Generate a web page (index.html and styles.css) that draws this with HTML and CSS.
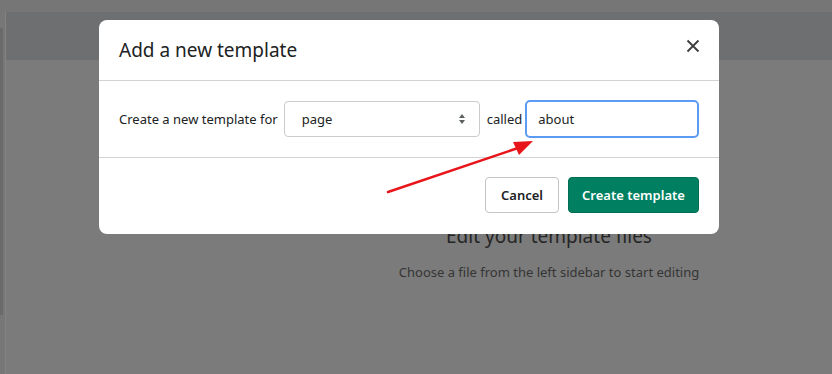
FILE: index.html
```html
<!DOCTYPE html>
<html>
<head>
<meta charset="utf-8">
<link rel="stylesheet" href="styles.css">
</head>
<body>
<div class="app">
  <div class="topbar"></div>
  <div class="frame">
    <div class="rail"><div class="rail-thumb"></div></div>
    <div class="workspace">
      <div class="toolbar"></div>
      <div class="main">
        <div class="sidebar"></div>
        <div class="content">
          <h2 class="empty-title">Edit your template files</h2>
          <p class="empty-text">Choose a file from the left sidebar to start editing</p>
        </div>
      </div>
    </div>
  </div>
</div>

<div class="modal">
  <div class="modal-header">
    <h1 class="modal-title">Add a new template</h1>
    <button class="close" aria-label="Close">
      <svg width="14" height="14" viewBox="0 0 14 14"><path d="M1.5 1.5 L12.5 12.5 M12.5 1.5 L1.5 12.5" stroke="#3d3d3d" stroke-width="1.8" fill="none"/></svg>
    </button>
  </div>
  <div class="modal-body">
    <span class="label">Create a new template for</span>
    <div class="select">
      <span>page</span>
      <svg class="updown" width="8" height="12" viewBox="0 0 8 12"><path d="M4 1 L7 5 H1 Z M4 11 L1 7 H7 Z" fill="#5c5f62"/></svg>
    </div>
    <span class="label called">called</span>
    <div class="input">about</div>
  </div>
  <div class="modal-footer">
    <button class="btn btn-secondary">Cancel</button>
    <button class="btn btn-primary">Create template</button>
  </div>
</div>

<svg class="annotation" width="832" height="374" viewBox="0 0 832 374">
  <line x1="388" y1="192" x2="518" y2="148" stroke="#e8161b" stroke-width="2.4" stroke-linecap="round"/>
  <path d="M533 141 L513 142 L519 155 Z" fill="#e8161b"/>
</svg>
</body>
</html>
```
FILE: styles.css
```css
* { box-sizing: border-box; }
html, body { margin: 0; padding: 0; }
body {
  width: 832px;
  height: 374px;
  overflow: hidden;
  background: #7a7a7a;
  font-family: "Noto Sans", "Open Sans", sans-serif;
  position: relative;
}
.app { display: flex; flex-direction: column; height: 374px; }
.topbar { height: 12px; background: #767676; flex: none; }
.frame { display: flex; flex: 1; }
.rail {
  width: 6px;
  background: #777;
  border-right: 1px solid #828282;
  flex: none;
  padding-top: 16px;
}
.rail-thumb { width: 3px; height: 287px; background: #6a6a6a; }
.workspace { flex: 1; display: flex; flex-direction: column; }
.toolbar { height: 48px; background: #6e6f71; flex: none; }
.main { flex: 1; display: flex; background: #7b7b7b; }
.sidebar { width: 260px; flex: none; }
.content {
  flex: 1;
  display: flex;
  flex-direction: column;
  align-items: center;
  padding-top: 163px;
}
.empty-title {
  margin: 0;
  font-weight: 400;
  font-size: 19px;
  color: #262626;
  line-height: 26px;
}
.empty-text {
  margin: 14px 0 0;
  font-size: 13px;
  color: #353535;
  white-space: nowrap;
}

.modal {
  position: absolute;
  left: 99px;
  top: 20px;
  width: 620px;
  height: 214px;
  background: #fff;
  border-radius: 8px;
  display: flex;
  flex-direction: column;
}
.modal-header {
  height: 61px;
  flex: none;
  border-bottom: 1px solid #d2d2d2;
  display: flex;
  align-items: center;
  justify-content: space-between;
  padding: 0 20px;
}
.modal-title {
  margin: 0;
  font-size: 19px;
  font-weight: 400;
  color: #202223;
}
.close {
  border: 0;
  background: none;
  padding: 0;
  width: 14px;
  height: 14px;
  display: flex;
  margin-top: -9px;
  margin-right: -1px;
}
.modal-body {
  height: 77px;
  flex: none;
  border-bottom: 1px solid #d2d2d2;
  display: flex;
  align-items: center;
  padding: 0 20px;
}
.label { font-size: 13px; color: #202223; white-space: nowrap; flex: none; }
.select {
  flex: none;
  margin-left: 6px;
  width: 196px;
  height: 36px;
  border: 1px solid #c9cccf;
  border-radius: 4px;
  display: flex;
  align-items: center;
  justify-content: space-between;
  padding: 0 13px 0 17px;
  font-size: 13px;
  color: #202223;
}
.called { margin-left: 7px; }
.input {
  flex: none;
  margin-left: 3px;
  width: 174px;
  height: 38px;
  border: 2px solid #5b9bf3;
  border-radius: 5px;
  display: flex;
  align-items: center;
  padding-left: 11px;
  font-size: 13px;
  color: #202223;
}
.modal-footer {
  flex: 1;
  display: flex;
  justify-content: flex-end;
  align-items: center;
  gap: 9px;
  padding: 0 20px 2px;
}
.btn {
  font-family: inherit;
  height: 36px;
  border-radius: 4px;
  font-size: 13px;
  font-weight: 600;
  padding: 0;
  white-space: nowrap;
  flex: none;
}
.btn-secondary {
  width: 74px;
  background: #fff;
  border: 1px solid #c4c4c4;
  color: #202223;
}
.btn-primary {
  width: 131px;
  background: #008060;
  border: 1px solid #006e52;
  color: #fff;
}
.annotation { position: absolute; left: 0; top: 0; pointer-events: none; }
```
